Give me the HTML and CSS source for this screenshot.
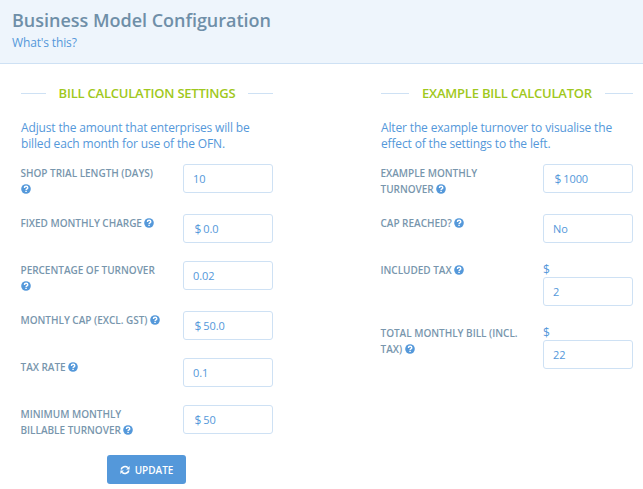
FILE: index.html
```html
<!DOCTYPE html>
<html lang="en">
<head>
<meta charset="utf-8">
<title>Business Model Configuration</title>
<link rel="stylesheet" href="styles.css">
</head>
<body>
<svg class="sprite" aria-hidden="true">
  <symbol id="help" viewBox="0 0 10 10">
    <circle cx="5" cy="5" r="4.8" fill="#5498da"/>
    <path d="M3.4 3.9C3.4 2.9 4.1 2.3 5.1 2.3S6.8 2.9 6.8 3.7C6.8 4.9 5.1 4.8 5.1 6" fill="none" stroke="#fff" stroke-width="1.4"/>
    <path d="M4.3 6.7h1.5v1.4H4.3z" fill="#fff"/>
  </symbol>
  <symbol id="refresh" viewBox="0 0 10 10">
    <path d="M1.2 4.5A3.9 3.5 0 0 1 7.8 2.6M8.8 5.5A3.9 3.5 0 0 1 2.2 7.4" fill="none" stroke="#fff" stroke-width="1.6"/>
    <path d="M9.6.9v3.5H6.1zM.4 9.1V5.6h3.5z" fill="#fff"/>
  </symbol>
</svg>
<header class="header">
  <h1 class="title">Business Model Configuration</h1>
  <a class="hint">What's this?</a>
</header>
<main class="columns">
  <section class="panel">
    <h2 class="legend"><span class="legend-text legend-left">Bill Calculation Settings</span></h2>
    <p class="intro">Adjust the amount that enterprises will be<br>billed each month for use of the OFN.</p>
    <div class="rows">
      <div class="row"><div class="label">Shop Trial Length (Days)<br><svg class="help first"><use href="#help"/></svg></div><div class="field">10</div></div>
      <div class="row"><div class="label">Fixed Monthly Charge<svg class="help"><use href="#help"/></svg></div><div class="field money"><span class="unit">$</span>0.0</div></div>
      <div class="row"><div class="label">Percentage of Turnover<br><svg class="help first"><use href="#help"/></svg></div><div class="field">0.02</div></div>
      <div class="row"><div class="label">Monthly Cap (excl. GST)<svg class="help"><use href="#help"/></svg></div><div class="field money"><span class="unit">$</span>50.0</div></div>
      <div class="row"><div class="label">Tax Rate<svg class="help"><use href="#help"/></svg></div><div class="field">0.1</div></div>
      <div class="row"><div class="label">Minimum Monthly<br>Billable Turnover<svg class="help"><use href="#help"/></svg></div><div class="field money"><span class="unit">$</span>50</div></div>
    </div>
    <button class="update"><svg class="refresh"><use href="#refresh"/></svg>Update</button>
  </section>
  <section class="panel">
    <h2 class="legend"><span class="legend-text legend-right">Example Bill Calculator</span></h2>
    <p class="intro">Alter the example turnover to visualise the<br>effect of the settings to the left.</p>
    <div class="rows">
      <div class="row"><div class="label">Example Monthly<br>Turnover<svg class="help"><use href="#help"/></svg></div><div class="field money"><span class="unit">$</span>1000</div></div>
      <div class="row"><div class="label">Cap Reached?<svg class="help"><use href="#help"/></svg></div><div class="field">No</div></div>
      <div class="row"><div class="label">Included Tax<svg class="help"><use href="#help"/></svg></div><div><div class="currency">$</div><div class="field">2</div></div></div>
      <div class="row"><div class="label">Total Monthly Bill (incl.<br>Tax)<svg class="help"><use href="#help"/></svg></div><div><div class="currency">$</div><div class="field">22</div></div></div>
    </div>
  </section>
</main>
</body>
</html>
```
FILE: styles.css
```css
* { box-sizing: border-box; }
body {
  margin: 0;
  height: 489px;
  overflow: hidden;
  background: #fff;
  color: #5498da;
  font: 13px/16px "Open Sans", sans-serif;
}
.sprite { display: none; }
.header {
  height: 64px;
  padding: 8px 12px 0;
  background: #eef5fc;
  border-bottom: 1px solid #cee1f4;
}
.title {
  margin: 0;
  color: #6f8fa8;
  font-size: 18px;
  font-weight: 600;
  letter-spacing: -0.02px;
  line-height: 25px;
}
.hint {
  display: block;
  font-size: 12px;
  letter-spacing: -0.14px;
  line-height: 19px;
}
.columns {
  display: grid;
  grid-template-columns: 252px 252px;
  column-gap: 108px;
  padding: 20px 0 0 21px;
}
.legend {
  display: flex;
  align-items: center;
  margin: 0;
  color: #9fc820;
  font-size: 13px;
  font-weight: 600;
  letter-spacing: -0.22px;
  line-height: 18px;
  text-transform: uppercase;
  white-space: nowrap;
}
.legend::before, .legend::after {
  content: "";
  flex: 1;
  height: 1px;
  background: #cee1f4;
}
.legend-text { padding: 0 13px; }
.intro {
  margin: 18px 0 12px;
  font-size: 12px;
  letter-spacing: -0.15px;
  white-space: nowrap;
}
.rows { display: grid; row-gap: 18px; }
.row {
  display: grid;
  grid-template-columns: 162px 90px;
  align-items: start;
}
.label {
  padding-top: 1px;
  margin: 0 0 -1px -0.5px;
  color: #7896ad;
  font-size: 10px;
  font-weight: 600;
  letter-spacing: -0.02px;
  text-transform: uppercase;
  white-space: nowrap;
}
.help {
  width: 10px;
  height: 10px;
  margin-left: 2.5px;
  vertical-align: -1px;
}
.first { margin-left: 0; }
.field {
  height: 29px;
  padding: 6px 9px 0;
  border: 1px solid #cee1f4;
  border-radius: 3px;
  font-size: 11px;
  letter-spacing: -0.1px;
  line-height: 15px;
}
.money { padding-left: 10.5px; }
.unit {
  display: inline-block;
  margin-right: 2px;
  font-size: 12px;
  transform: translateY(1px);
}
.currency { height: 16px; padding-top: 1px; font-size: 12px; }
.update {
  display: flex;
  align-items: center;
  justify-content: center;
  gap: 5px;
  width: 79px;
  height: 29px;
  margin: 18px 0 0 86px;
  padding: 0;
  border: 0;
  border-radius: 3px;
  background: #5498da;
  color: #fff;
  font: 600 10px/16px "Open Sans", sans-serif;
  text-transform: uppercase;
}
.refresh { width: 10px; height: 10px; }
```
